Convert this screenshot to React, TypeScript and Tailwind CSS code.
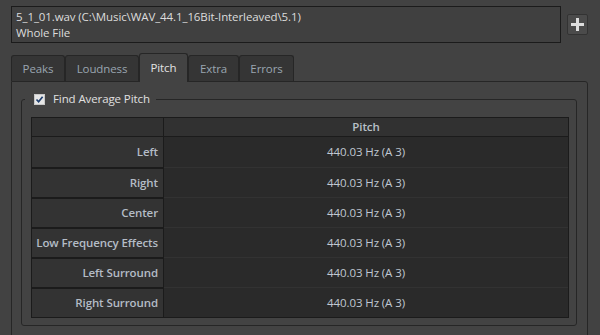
import React from 'react';

const rows = ['Left', 'Right', 'Center', 'Low Frequency Effects', 'Left Surround', 'Right Surround'];

const tabs = [
  { name: 'Peaks', w: 'w-[54px]' },
  { name: 'Loudness', w: 'w-[74px]' },
  { name: 'Pitch', w: 'w-[49px]', active: true },
  { name: 'Extra', w: 'w-[51px]' },
  { name: 'Errors', w: 'w-[55px]' },
];

const App = () => {
  return (
    <div
      className="w-[600px] h-[335px] overflow-hidden bg-[#424242] pl-[11px] pt-[6px] text-[11.5px] tracking-[-0.1px]"
      style={{ fontFamily: '"Open Sans", "Noto Sans", sans-serif' }}
    >
      {/* file path box */}
      <div className="flex items-center">
        <div className="w-[550px] h-[37px] border border-[#1b1b1b] bg-[#404040] pl-[4px] pt-[2px] leading-[16px] text-[#dcdcdc]">
          <div>5_1_01.wav (C:\Music\WAV_44.1_16Bit-Interleaved\5.1)</div>
          <div>Whole File</div>
        </div>
        <button className="ml-[6px] w-[21px] h-[21px] flex items-center justify-center rounded-[2px] border border-[#333] bg-[#4b4b4b]">
          <svg width="13" height="13" viewBox="0 0 13 13">
            <rect x="5" y="0" width="3" height="13" fill="#dedede" />
            <rect x="0" y="5" width="13" height="3" fill="#dedede" />
          </svg>
        </button>
      </div>

      {/* tabs */}
      <div className="mt-[10px] flex items-end h-[28px]">
        {tabs.map((t) =>
          t.active ? (
            <div
              key={t.name}
              className={`${t.w} relative z-10 -mb-[1px] h-[29px] flex items-center justify-center rounded-t-[3px] border border-b-0 border-[#262626] bg-[#434343] text-[#e2e2e2]`}
            >
              {t.name}
            </div>
          ) : (
            <div
              key={t.name}
              className={`${t.w} h-[26px] flex items-center justify-center rounded-t-[3px] border border-b-0 border-[#262626] bg-[#353535] text-[#9aa5b0]`}
            >
              {t.name}
            </div>
          )
        )}
      </div>

      {/* tab panel */}
      <div className="w-[577px] h-[270px] rounded-tr-[3px] border border-[#262626] bg-[#434343] pl-[9px] pt-[9px]">
        <fieldset className="w-[556px] rounded-[3px] border border-[#262626] pl-[9px] pt-[10px] pb-[7px]">
          <legend className="-ml-[6px] pl-[9px] pr-[6px] flex items-center h-[16px] text-[#e0e0e0]">
            <span className="w-[11px] h-[11px] flex items-center justify-center border border-[#c8c8c8] bg-[#e6e6e6]">
              <svg width="9" height="9" viewBox="0 0 9 9">
                <path d="M1.5 4.5 L3.6 6.8 L7.6 1.8" stroke="#1f3f6e" strokeWidth="1.7" fill="none" />
              </svg>
            </span>
            <span className="ml-[8px]">Find Average Pitch</span>
          </legend>

          <div className="w-[538px] border border-[#1b1b1b] grid grid-cols-[132px_1fr]">
            <div className="h-[19px] border-r border-b border-[#1b1b1b] bg-[#313131]" />
            <div className="h-[19px] border-b border-[#1b1b1b] bg-[#313131] flex items-center justify-center font-semibold text-[#b8c0c8]">
              Pitch
            </div>
            {rows.map((r, i) => (
              <React.Fragment key={r}>
                <div
                  className={`h-[30px] border-r border-[#1b1b1b] bg-[#333333] flex items-center justify-end pr-[5px] whitespace-nowrap font-semibold text-[#b4bcc6] ${
                    i > 0 ? 'border-t-2' : ''
                  }`}
                >
                  {r}
                </div>
                <div
                  className={`h-[30px] bg-[#2a2a2a] flex items-center justify-center text-[#c0c8d2] ${
                    i > 0 ? 'border-t border-[#323232]' : ''
                  }`}
                >
                  440.03 Hz (A 3)
                </div>
              </React.Fragment>
            ))}
          </div>
        </fieldset>
      </div>
    </div>
  );
};

export default App;
